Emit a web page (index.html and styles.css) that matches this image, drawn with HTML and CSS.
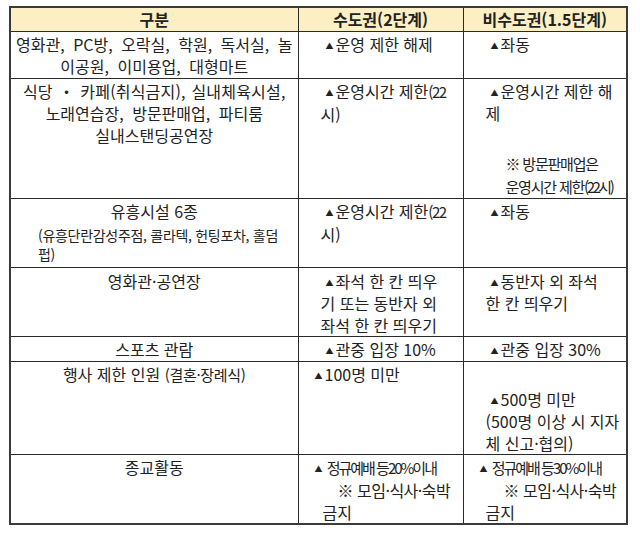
FILE: index.html
```html
<!DOCTYPE html>
<html lang="ko">
<head>
<meta charset="utf-8">
<title>거리두기 단계</title>
<link rel="stylesheet" href="styles.css">
</head>
<body>
<table class="rules">
  <colgroup>
    <col class="c1"><col class="c2"><col class="c3">
  </colgroup>
  <thead>
    <tr class="h-head">
      <th>구분</th>
      <th>수도권(2단계)</th>
      <th>비수도권(1.5단계)</th>
    </tr>
  </thead>
  <tbody>
    <tr class="h-r1">
      <td class="cat"><div class="wide">영화관, PC방, 오락실, 학원, 독서실, 놀</div><div class="wide">이공원, 이미용업, 대형마트</div></td>
      <td class="val2"><div class="tri"><span class="mk">▲</span>운영 제한 해제</div></td>
      <td class="val3"><div class="tri"><span class="mk">▲</span>좌동</div></td>
    </tr>
    <tr class="h-r2">
      <td class="cat"><div class="wide2">식당 ・ 카페(취식금지), 실내체육시설,</div><div class="wide">노래연습장, 방문판매업, 파티룸</div><div>실내스탠딩공연장</div></td>
      <td class="val2"><div class="tri"><span class="mk">▲</span>운영시간 제한<span class="cond">(22</span></div><div>시)</div></td>
      <td class="val3"><div class="tri"><span class="mk">▲</span>운영시간 제한 해</div><div>제</div><div class="note gap"><span class="tight">※ 방문판매업은</span></div><div class="note"><span class="tight">운영시간 제한<span class="cond2">(22시)</span></span></div></td>
    </tr>
    <tr class="h-r3">
      <td class="cat"><div>유흥시설 6종</div><div class="small left first">(유흥단란감성주점, 콜라텍, 헌팅포차, 홀덤</div><div class="small left">펍)</div></td>
      <td class="val2"><div class="tri"><span class="mk">▲</span>운영시간 제한<span class="cond">(22</span></div><div>시)</div></td>
      <td class="val3"><div class="tri"><span class="mk">▲</span>좌동</div></td>
    </tr>
    <tr class="h-r4">
      <td class="cat pt3"><div>영화관·공연장</div></td>
      <td class="val2 pt3"><div class="tri"><span class="mk">▲</span>좌석 한 칸 띄우</div><div>기 또는 동반자 외</div><div>좌석 한 칸 띄우기</div></td>
      <td class="val3 pt3"><div class="tri"><span class="mk">▲</span>동반자 외 좌석</div><div>한 칸 띄우기</div></td>
    </tr>
    <tr class="h-r5">
      <td class="cat"><div>스포츠 관람</div></td>
      <td class="val2"><div class="tri"><span class="mk">▲</span>관중 입장 10%</div></td>
      <td class="val3"><div class="tri"><span class="mk">▲</span>관중 입장 30%</div></td>
    </tr>
    <tr class="h-r6">
      <td class="cat"><div>행사 제한 인원 <span class="paren">(결혼·장례식)</span></div></td>
      <td class="val2"><div class="tri-out"><span class="mk">▲</span>100명 미만</div></td>
      <td class="val3 pt-low"><div class="tri"><span class="mk">▲</span>500명 미만</div><div>(500명 이상 시 지자</div><div>체 신고·협의)</div></td>
    </tr>
    <tr class="h-r7">
      <td class="cat"><div>종교활동</div></td>
      <td class="val2"><div class="tri-out"><span class="squeeze"><span class="mk">▲</span> 정규예배 등20%이내</span></div><div class="note2">※ 모임·식사·숙박</div><div class="end">금지</div></td>
      <td class="val3"><div class="tri-out"><span class="squeeze"><span class="mk">▲</span> 정규예배 등30%이내</span></div><div class="note3">※ 모임·식사·숙박</div><div>금지</div></td>
    </tr>
  </tbody>
</table>
</body>
</html>
```

FILE: styles.css
```css
html, body {
  margin: 0;
  padding: 0;
  background: #ffffff;
}

body {
  font-family: "Noto Sans CJK KR", "Noto Sans", sans-serif;
  color: #222222;
  font-size: 16px;
}

.rules {
  margin: 6px 0 0 9px;
  width: 617px;
  table-layout: fixed;
  border-collapse: collapse;
  border: 2px solid #3a3a3a;
}

.c1 { width: 288px; }
.c2 { width: 165px; }
.c3 { width: 164px; }

.rules th,
.rules td {
  border: 1px solid #2a2a2a;
  vertical-align: top;
  padding: 1px 0 0 0;
  line-height: 22px;
  white-space: nowrap;
  overflow: hidden;
  box-sizing: border-box;
}

.rules th {
  background: #fdefc4;
  font-weight: 700;
  font-size: 16px;
  text-align: center;
  line-height: 21px;
  padding: 1px 0 0 0;
}

.h-head th { height: 24px; }
.h-r1 td { height: 47px; }
.h-r2 td { height: 118px; }
.h-r3 td { height: 69px; }
.h-r4 td { height: 69px; }
.h-r5 td { height: 25px; }
.h-r6 td { height: 93px; }
.h-r7 td { height: 69px; }

.cat {
  text-align: center;
}

.wide { word-spacing: 4px; }
.wide2 { word-spacing: 1px; letter-spacing: 0.2px; }

.val2 { padding-left: 22px !important; }
.val3 { padding-left: 22px !important; }

.pt3 { padding-top: 2px !important; }
.pt-low { padding-top: 26px !important; }

.tri { margin-left: 5px; }
.tri-out { margin-left: -6px; }

.mk {
  font-size: 8px;
  display: inline-block;
  width: 10px;
  vertical-align: 2px;
  line-height: 1;
}

.cond {
  letter-spacing: -1.5px;
  font-size: 15px;
}

.cond2 {
  letter-spacing: -2.5px;
}

.tight {
  font-size: 15px;
  letter-spacing: -1.2px;
}

.note { margin-left: 20px; }
.note.gap { margin-top: 28px; }

.small {
  font-size: 14px;
  letter-spacing: -0.3px;
  line-height: 19px;
}

.left {
  text-align: left;
  padding-left: 27px;
}

.first { margin-top: 4px; }

.paren {
  font-size: 15px;
  letter-spacing: -0.3px;
}

.squeeze {
  font-size: 15px;
  letter-spacing: -2px;
}

.note2 {
  margin-left: 17px;
  letter-spacing: -0.5px;
}
.note3 {
  margin-left: 18px;
  letter-spacing: -0.5px;
}
.end { margin-left: 2px; }
```
